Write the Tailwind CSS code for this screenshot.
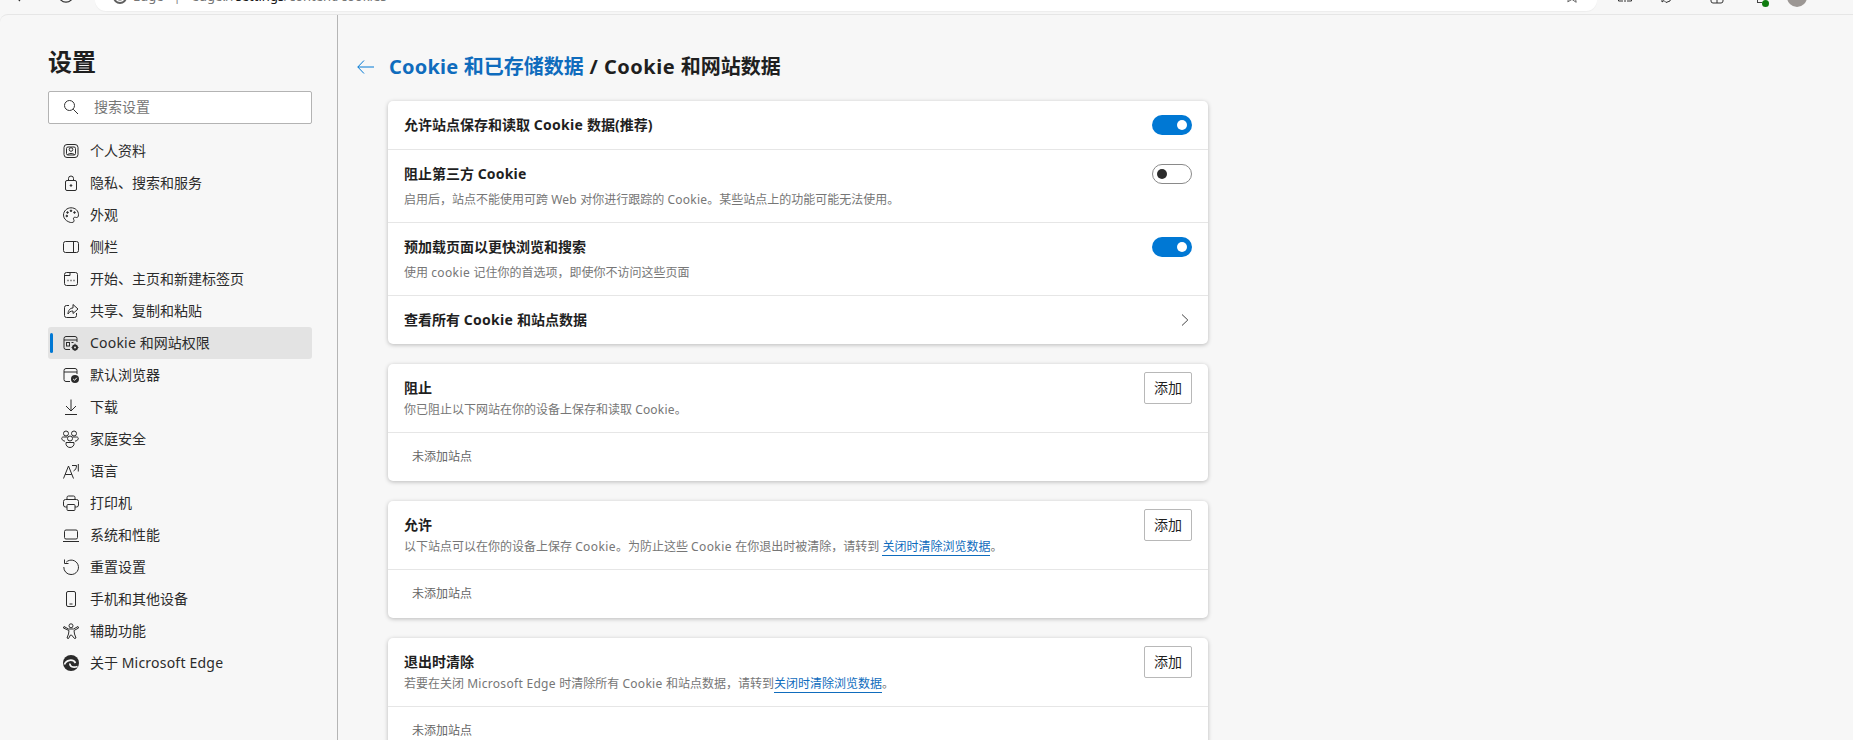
<!DOCTYPE html>
<html lang="zh-CN">
<head>
<meta charset="utf-8">
<title>设置</title>
<script src="https://cdn.jsdelivr.net/npm/@tailwindcss/browser@4"></script>
</head>
<body class="h-[740px] w-[1853px] overflow-hidden bg-[#f7f7f7] font-['Noto_Sans','Noto_Sans_CJK_SC',sans-serif] text-[#1f1f1f]">

<div class="flex h-[14px] items-start overflow-hidden">
  <div class="flex w-[95px] shrink-0 items-start">
    <svg class="ml-[12px] -mt-[13px] h-4 w-4 shrink-0" viewBox="0 0 16 16" fill="none" stroke="#333" stroke-width="1.2"><path d="M14 8H2M8 2 2 8l6 6"/></svg>
    <svg class="ml-[30px] -mt-[13px] h-4 w-4 shrink-0" viewBox="0 0 16 16" fill="none" stroke="#333" stroke-width="1.2"><circle cx="8" cy="8" r="7.2"/></svg>
  </div>
  <div class="flex h-[11px] w-[1502px] shrink-0 items-start rounded-b-[14px] bg-white shadow-[0_1px_1px_rgba(0,0,0,0.04)]">
    <svg class="ml-[18px] -mt-[10px] h-[14px] w-[14px] shrink-0" viewBox="0 0 14 14"><circle cx="7" cy="7" r="7" fill="#5f5f5f"/><path d="M3 9c2 3 6 3 8 0" fill="none" stroke="#fff" stroke-width="1.4"/></svg>
    <div class="-mt-[14px] ml-[6px] flex h-5 items-center text-[13px] leading-5 text-[#767676]">
      <span>Edge</span><span class="ml-[10px] text-[#8a8a8a]">|</span><span class="ml-[11px]">edge://<span class="text-[#1a1a1a]">settings</span>/content/cookies</span>
    </div>
    <svg class="ml-auto mr-[17px] -mt-[12px] h-4 w-4 shrink-0" viewBox="0 0 16 16" fill="none" stroke="#666"><path d="M8 1.500l2 4.400 4.800.5-3.600 3.200 1 4.700L8 11.400 3.800 13.800l1-4.700L1.200 6.400 6 5.900z"/></svg>
  </div>
  <div class="flex flex-1 items-start">
    <svg class="ml-[20px] -mt-[14px] h-4 w-4 shrink-0" viewBox="0 0 16 16" fill="none" stroke="#333"><path d="M8 0v16M6 3H1.500v12H6M10 3h4.500v12H10"/></svg>
    <svg class="ml-[26px] -mt-[13px] h-4 w-4 shrink-0" viewBox="0 0 16 16" fill="none" stroke="#333"><path d="M3 3h8l2 2-2 9-4 1.500-2-2L3 15z"/></svg>
    <svg class="ml-[34px] -mt-[12px] h-4 w-4 shrink-0" viewBox="0 0 16 16" fill="none" stroke="#333"><rect x="2" y="1" width="12" height="14" rx="2"/><path d="M8 9v6"/></svg>
    <div class="relative ml-[29px] h-[10px] w-[16px] shrink-0">
      <div class="absolute left-[8px] top-0 h-[7px] w-[7px] rounded-full bg-[#107c10]"></div>
      <div class="absolute left-[3px] top-0 h-[3px] w-[5px] border-b border-l border-[#444]"></div>
    </div>
    <div class="ml-[17px] -mt-[13px] h-5 w-5 shrink-0 rounded-full bg-[#9c9794]"></div>
  </div>
</div>

<div class="flex h-[726px] rounded-tl-lg border-t border-[#e6e6e6]">
  <aside class="w-[338px] shrink-0 border-r border-[#b5b5b5] pl-12 pt-[31px]">
    <h1 class="flex h-8 items-center text-2xl leading-8 font-bold text-[#1f1f1f]">设置</h1>
    <div class="mt-[13px] flex h-[33px] w-[264px] items-center rounded-[2px] border border-[#b3b3b3] bg-white pb-px pl-[14px]">
      <svg class="h-4 w-4 shrink-0" viewBox="0 0 16 16" fill="none" stroke="#333"><circle cx="6.500" cy="6.500" r="5"/><path d="M10.200 10.200l4.800 4.800"/></svg>
      <span class="ml-[15px] text-sm leading-5 text-[#767676]">搜索设置</span>
    </div>
    <nav class="mt-[11px] w-[264px] text-sm leading-5 text-[#2b2b2b]">
      <a class="flex h-8 items-center pl-[15px]"><svg class="h-4 w-4 shrink-0" viewBox="0 0 16 16" fill="none" stroke="#2b2b2b"><rect x="1" y="1.500" width="14" height="13" rx="3"/><rect x="3.500" y="4" width="9" height="8" rx="1.500"/><circle cx="8" cy="6.500" r="1.800"/><path d="M4.500 12c.5-2 6.500-2 7 0"/></svg><span class="ml-[11px]">个人资料</span></a>
      <a class="flex h-8 items-center pl-[15px]"><svg class="h-4 w-4 shrink-0" viewBox="0 0 16 16" fill="none" stroke="#2b2b2b"><rect x="2.500" y="5.500" width="11" height="10" rx="1.500"/><path d="M5.500 5.500V3.500a2.500 2.500 0 015 0v2"/><circle cx="8" cy="10.500" r=".8" fill="#2b2b2b"/></svg><span class="ml-[11px]">隐私、搜索和服务</span></a>
      <a class="flex h-8 items-center pl-[15px]"><svg class="h-4 w-4 shrink-0" viewBox="0 0 16 16" fill="none" stroke="#2b2b2b"><path d="M8 .8c4.500 0 7.500 3 7.500 7 0 2-1 3-2.200 2.700-1.300-.3-2.300-.5-2.800.5-.6 1.300 1.300 2.200.3 3.700-.8 1-3 1.200-5 .2C2.500 13.600.5 11 .5 8 .5 4 4 .8 8 .8z"/><circle cx="4.500" cy="5.500" r=".8" fill="#2b2b2b"/><circle cx="8" cy="3.800" r=".8" fill="#2b2b2b"/><circle cx="11.500" cy="5.500" r=".8" fill="#2b2b2b"/><circle cx="3.800" cy="9" r=".8" fill="#2b2b2b"/></svg><span class="ml-[11px]">外观</span></a>
      <a class="flex h-8 items-center pl-[15px]"><svg class="h-4 w-4 shrink-0" viewBox="0 0 16 16" fill="none" stroke="#2b2b2b"><rect x=".5" y="2.500" width="15" height="11" rx="2"/><path d="M10.500 2.500v11"/></svg><span class="ml-[11px]">侧栏</span></a>
      <a class="flex h-8 items-center pl-[15px]"><svg class="h-4 w-4 shrink-0" viewBox="0 0 16 16" fill="none" stroke="#2b2b2b"><rect x="1.500" y="1.500" width="13" height="13" rx="2"/><path d="M1.500 4.500H7V1.500"/><path d="M4.500 9.500h1M7.500 9.500h1M10.500 9.500h1" stroke-width="1.400"/></svg><span class="ml-[11px]">开始、主页和新建标签页</span></a>
      <a class="flex h-8 items-center pl-[15px]"><svg class="h-4 w-4 shrink-0" viewBox="0 0 16 16" fill="none" stroke="#2b2b2b"><path d="M6 2.500H3.500a2 2 0 00-2 2v8a2 2 0 002 2h8a2 2 0 002-2V10"/><path d="M10 1.500 15 6l-5 4.500V8c-2.500 0-4 1-5 3 0-3.500 2-6 5-6z"/></svg><span class="ml-[11px]">共享、复制和粘贴</span></a>
      <a class="relative flex h-8 items-center rounded-[3px] bg-[#e3e3e3] pl-[15px]"><span class="absolute left-[2px] top-[6px] h-5 w-[3px] rounded-sm bg-[#0078d4]"></span><svg class="h-4 w-4 shrink-0" viewBox="0 0 16 16" fill="none" stroke="#2b2b2b"><path d="M7 14.500H3a2 2 0 01-2-2v-9a2 2 0 012-2h9a2 2 0 012 2V7"/><path d="M1 5h13"/><rect x="3.500" y="7.500" width="3" height="3.500"/><path d="M8.500 7.500h2"/><circle cx="12" cy="12.500" r="3" fill="#2b2b2b" stroke="none"/><circle cx="12" cy="12.500" r="1" fill="#e3e3e3" stroke="none"/><path d="M12 8.800v1M12 15.200v1M8.500 12.500h1M14.500 12.500h1" stroke-width="1.200"/></svg><span class="ml-[11px]"><span class="tracking-[0.2px]">Cookie </span>和网站权限</span></a>
      <a class="flex h-8 items-center pl-[15px]"><svg class="h-4 w-4 shrink-0" viewBox="0 0 16 16" fill="none" stroke="#2b2b2b"><path d="M7 14.500H3a2 2 0 01-2-2v-9a2 2 0 012-2h9a2 2 0 012 2V7"/><path d="M1 5h13"/><circle cx="12" cy="12" r="4" fill="#2b2b2b" stroke="none"/><path d="M10.200 12l1.300 1.300 2.300-2.500" stroke="#fff"/></svg><span class="ml-[11px]">默认浏览器</span></a>
      <a class="flex h-8 items-center pl-[15px]"><svg class="h-4 w-4 shrink-0" viewBox="0 0 16 16" fill="none" stroke="#2b2b2b"><path d="M8 .5v11M3 7l5 5 5-5M2 15.500h12"/></svg><span class="ml-[11px]">下载</span></a>
      <a class="flex h-8 items-center pl-[13px]"><svg class="h-[18px] w-[18px] shrink-0" viewBox="0 0 18 18" fill="none" stroke="#2b2b2b"><circle cx="5" cy="3.500" r="2.500"/><circle cx="13" cy="3.500" r="2.500"/><circle cx="9" cy="8.500" r="2.500"/><path d="M6.500 7H2.200C1 7 .5 8 .8 9c.4 1.200 1.800 2 3.200 2.200M11.500 7h4.300c1.200 0 1.700 1 1.400 2-.4 1.200-1.800 2-3.200 2.200"/><path d="M5 12.500h8c.5 3-1.500 5-4 5s-4.500-2-4-5z"/></svg><span class="ml-[11px]">家庭安全</span></a>
      <a class="flex h-8 items-center pl-[15px]"><svg class="h-4 w-4 shrink-0" viewBox="0 0 16 16" fill="none" stroke="#2b2b2b"><path d="M.5 15.500 5.500 3l5 12.500M2.200 11.500h6.600"/><path d="M9 2.500h4.500C13.500 5 12.500 7 10.500 8M15.300 1v7.500"/></svg><span class="ml-[11px]">语言</span></a>
      <a class="flex h-8 items-center pl-[15px]"><svg class="h-4 w-4 shrink-0" viewBox="0 0 16 16" fill="none" stroke="#2b2b2b"><path d="M4 4.500v-2a1.500 1.500 0 011.500-1.500h5A1.500 1.500 0 0112 2.500v2"/><path d="M4 12H2.500A2 2 0 01.500 10V6.500a2 2 0 012-2h11a2 2 0 012 2V10a2 2 0 01-2 2H12"/><rect x="4" y="9.500" width="8" height="6" rx="1"/></svg><span class="ml-[11px]">打印机</span></a>
      <a class="flex h-8 items-center pl-[15px]"><svg class="h-4 w-4 shrink-0" viewBox="0 0 16 16" fill="none" stroke="#2b2b2b"><rect x="1.500" y="3" width="13" height="9" rx="1.500"/><path d="M0 14.500h16"/></svg><span class="ml-[11px]">系统和性能</span></a>
      <a class="flex h-8 items-center pl-[15px]"><svg class="h-4 w-4 shrink-0" viewBox="0 0 16 16" fill="none" stroke="#2b2b2b"><path d="M3.200 3.200A7.200 7.200 0 118 15.500 7.200 7.200 0 01.800 8"/><path d="M1.500 .5v4h4"/></svg><span class="ml-[11px]">重置设置</span></a>
      <a class="flex h-8 items-center pl-[15px]"><svg class="h-4 w-4 shrink-0" viewBox="0 0 16 16" fill="none" stroke="#2b2b2b"><rect x="3.500" y=".5" width="9" height="15" rx="1.500"/><path d="M6.500 13h3"/></svg><span class="ml-[11px]">手机和其他设备</span></a>
      <a class="flex h-8 items-center pl-[15px]"><svg class="h-4 w-4 shrink-0" viewBox="0 0 16 16" fill="none" stroke="#2b2b2b"><circle cx="8" cy="2.800" r="2"/><path d="M1 3.500l4.500 2.500h5L15 3.500l.6 1.500-4.600 2.500.5 3.500 1.500 4-1.500.5L8.500 12h-1l-2 3.500-1.500-.5 1.500-4 .5-3.500L.4 5z"/></svg><span class="ml-[11px]">辅助功能</span></a>
      <a class="flex h-8 items-center pl-[15px]"><svg class="h-4 w-4 shrink-0" viewBox="0 0 16 16" fill="none"><circle cx="8" cy="8" r="8" fill="#2b2b2b"/><path d="M1.500 9.500C3 4.800 10 3.500 12.500 8" stroke="#f7f7f7" stroke-width="1.700"/><path d="M7 8.500c-.5 3 3 4.500 7.500 3" stroke="#f7f7f7" stroke-width="1.700"/></svg><span class="ml-[11px]">关于 <span class="tracking-[0.22px]">Microsoft Edge</span></span></a>
    </nav>
  </aside>

  <main class="min-w-0 flex-1 pl-5 pt-9">
    <div class="flex h-8 items-center">
      <svg class="-ml-px h-4 w-[17px] shrink-0" viewBox="0 0 17 16" fill="none" stroke="#0078d4"><path d="M17 8H.8M7 1.500.8 8 7 14.500"/></svg>
      <h2 class="ml-[15px] text-[20px] leading-8 font-bold text-[#1f1f1f]"><span class="text-[#0f6cbd]"><span class="tracking-[0.2px]">Cookie </span>和已存储数据</span><span class="tracking-[0.5px]"> / Cookie </span>和网站数据</h2>
    </div>

    <div class="ml-[30px] mt-[18px] w-[820px]">
      <section class="rounded-[5px] bg-white shadow-[0_1px_4px_rgba(0,0,0,0.25)]">
        <div class="flex h-[49px] items-center justify-between border-b border-[#e6e6e6] pl-4 pr-4 pb-px">
          <h3 class="text-sm leading-5 font-bold">允许站点保存和读取 <span class="tracking-[0.3px]">Cookie </span>数据(推荐)</h3>
          <div class="flex h-5 w-10 items-center justify-end rounded-full bg-[#0078d4] pr-[5px]"><span class="h-[10px] w-[10px] rounded-full bg-white"></span></div>
        </div>
        <div class="flex h-[73px] items-start justify-between border-b border-[#e6e6e6] pl-4 pr-4 pt-[14px]">
          <div>
            <h3 class="text-sm leading-5 font-bold">阻止第三方 <span class="tracking-[0.2px]">Cookie</span></h3>
            <p class="mt-[6px] text-xs leading-5 text-[#767676]">启用后，站点不能使用可跨 <span class="tracking-[0.25px]">Web </span>对你进行跟踪的 <span class="tracking-[0.25px]">Cookie</span>。某些站点上的功能可能无法使用。</p>
          </div>
          <div class="flex h-5 w-10 items-center rounded-full border border-[#8a8a8a] bg-white pl-[4px]"><span class="h-[10px] w-[10px] rounded-full bg-[#2b2b2b]"></span></div>
        </div>
        <div class="flex h-[73px] items-start justify-between border-b border-[#e6e6e6] pl-4 pr-4 pt-[14px]">
          <div>
            <h3 class="text-sm leading-5 font-bold">预加载页面以更快浏览和搜索</h3>
            <p class="mt-[6px] text-xs leading-5 text-[#767676]">使用 <span class="tracking-[0.4px]">cookie </span>记住你的首选项，即使你不访问这些页面</p>
          </div>
          <div class="flex h-5 w-10 items-center justify-end rounded-full bg-[#0078d4] pr-[5px]"><span class="h-[10px] w-[10px] rounded-full bg-white"></span></div>
        </div>
        <div class="flex h-[48px] items-center justify-between pl-4 pr-[19px]">
          <h3 class="text-sm leading-5 font-bold">查看所有 <span class="tracking-[0.3px]">Cookie </span>和站点数据</h3>
          <svg class="h-3 w-2" viewBox="0 0 8 12" fill="none" stroke="#444"><path d="M1 .5 6.800 6 1 11.500"/></svg>
        </div>
      </section>

      <section class="mt-5 rounded-[5px] bg-white shadow-[0_1px_4px_rgba(0,0,0,0.25)]">
        <div class="flex h-[69px] items-start justify-between border-b border-[#e6e6e6] pl-4 pr-4 pt-2">
          <div class="pt-[6px]">
            <h3 class="text-sm leading-5 font-bold">阻止</h3>
            <p class="mt-[2px] text-xs leading-5 text-[#767676]">你已阻止以下网站在你的设备上保存和读取 <span class="tracking-[0.2px]">Cookie</span>。</p>
          </div>
          <button class="h-8 w-12 rounded-[2px] border border-[#b8b8b8] bg-white text-sm leading-5 text-[#1f1f1f]">添加</button>
        </div>
        <div class="flex h-12 items-center pl-6 text-xs leading-5 text-[#666666]">未添加站点</div>
      </section>

      <section class="mt-5 rounded-[5px] bg-white shadow-[0_1px_4px_rgba(0,0,0,0.25)]">
        <div class="flex h-[69px] items-start justify-between border-b border-[#e6e6e6] pl-4 pr-4 pt-2">
          <div class="pt-[6px]">
            <h3 class="text-sm leading-5 font-bold">允许</h3>
            <p class="mt-[2px] text-xs leading-5 text-[#767676]">以下站点可以在你的设备上保存 <span class="tracking-[0.4px]">Cookie</span>。为防止这些 <span class="tracking-[0.4px]">Cookie </span>在你退出时被清除，请转到 <a class="border-b border-[#0f6cbd] text-[#0f6cbd]">关闭时清除浏览数据</a>。</p>
          </div>
          <button class="h-8 w-12 rounded-[2px] border border-[#b8b8b8] bg-white text-sm leading-5 text-[#1f1f1f]">添加</button>
        </div>
        <div class="flex h-12 items-center pl-6 text-xs leading-5 text-[#666666]">未添加站点</div>
      </section>

      <section class="mt-5 rounded-[5px] bg-white shadow-[0_1px_4px_rgba(0,0,0,0.25)]">
        <div class="flex h-[69px] items-start justify-between border-b border-[#e6e6e6] pl-4 pr-4 pt-2">
          <div class="pt-[6px]">
            <h3 class="text-sm leading-5 font-bold">退出时清除</h3>
            <p class="mt-[2px] text-xs leading-5 text-[#767676]">若要在关闭 <span class="tracking-[0.3px]">Microsoft Edge </span>时清除所有 <span class="tracking-[0.3px]">Cookie </span>和站点数据，请转到<a class="border-b border-[#0f6cbd] text-[#0f6cbd]">关闭时清除浏览数据</a>。</p>
          </div>
          <button class="h-8 w-12 rounded-[2px] border border-[#b8b8b8] bg-white text-sm leading-5 text-[#1f1f1f]">添加</button>
        </div>
        <div class="flex h-12 items-center pl-6 text-xs leading-5 text-[#666666]">未添加站点</div>
      </section>
    </div>
  </main>
</div>
</body>
</html>
